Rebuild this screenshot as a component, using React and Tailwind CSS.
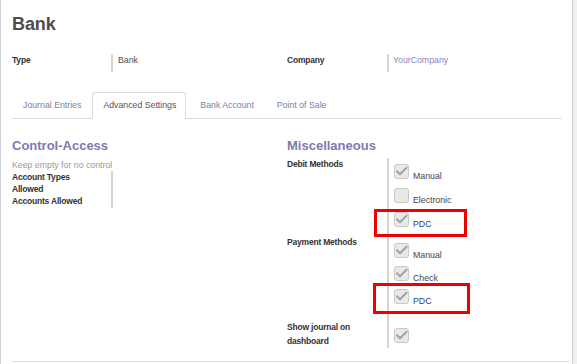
import React from "react";

function Box({ checked }) {
  return (
    <div className="relative w-[15px] h-[15px] shrink-0 rounded-[3px] border border-[#c9c9c9] bg-[#e9e9e9]">
      {checked && (
        <svg className="absolute left-[-1px] top-[-1px]" width="15" height="15" viewBox="0 0 15 15">
          <path d="M3 7.3 L6 10.3 L12.5 3.8" fill="none" stroke="#a3a3a3" strokeWidth="2.1" strokeLinecap="round" strokeLinejoin="round" />
        </svg>
      )}
    </div>
  );
}

function Item({ checked, label, color, mb }) {
  return (
    <div className={`flex items-baseline gap-[4px] h-[15px] ${mb}`}>
      <Box checked={checked} />
      <span className={`text-[8.75px] leading-[10px] ${color}`}>{label}</span>
    </div>
  );
}

export default function App() {
  return (
    <div className="relative w-[577px] h-[364px] overflow-hidden flex bg-white font-['Liberation_Sans',Arial,sans-serif]">
      <div className="w-[573px] h-full shrink-0 border-l border-r border-[#cfcfdc] pl-[11px] pr-[10px] pt-[13px] bg-white">
        <h1 className="text-[18px] leading-[22px] font-bold text-[#4c4c4c] tracking-[-0.1px]">Bank</h1>

        <div className="mt-[19px] grid grid-cols-[275px_275px]">
          <div className="flex">
            <div className="w-[99px] text-[8.5px] leading-[12px] font-bold tracking-[-0.2px] text-[#333]">Type</div>
            <div className="h-[18px] border-l-2 border-[#d4d4d4] pl-[5px] text-[8.75px] leading-[12px] text-[#4c4c4c]">Bank</div>
          </div>
          <div className="flex">
            <div className="w-[100px] text-[8.5px] leading-[12px] font-bold tracking-[-0.2px] text-[#333]">Company</div>
            <div className="h-[18px] border-l-2 border-[#d4d4d4] pl-[4px] text-[8.75px] leading-[12px] text-[#8786b8]">YourCompany</div>
          </div>
        </div>

        <div className="mt-[20px] flex border-b border-[#dcdcdc] text-[8.75px]">
          <div className="-mb-px h-[27px] flex items-center px-[10px] border border-b-0 border-transparent rounded-t-[3px] text-[#7c7bad]">Journal Entries</div>
          <div className="-mb-px h-[27px] flex items-center pl-[10px] pr-[9px] border border-b-0 border-[#dcdcdc] rounded-t-[3px] bg-white text-[#555]">Advanced Settings</div>
          <div className="-mb-px h-[27px] flex items-center pl-[13px] pr-[11px] border border-b-0 border-transparent rounded-t-[3px] text-[#7c7bad]">Bank Account</div>
          <div className="-mb-px h-[27px] flex items-center px-[10px] border border-b-0 border-transparent rounded-t-[3px] text-[#7c7bad]">Point of Sale</div>
        </div>

        <div className="mt-[19px] grid grid-cols-[275px_275px] items-start">
          <div>
            <h2 className="text-[13px] leading-[16px] font-bold text-[#7c7bad]">Control-Access</h2>
            <div className="mt-[5px] text-[8.75px] leading-[12px] text-[#9a9a9a]">Keep empty for no control</div>
            <div className="flex">
              <div className="w-[99px] pr-[12px] text-[8.5px] leading-[12px] font-bold tracking-[-0.2px] text-[#333]">Account Types Allowed</div>
              <div className="border-l-2 border-[#d4d4d4] pl-[5px]"></div>
            </div>
            <div className="flex">
              <div className="w-[99px] pr-[4px] pb-[1px] text-[8.5px] leading-[12px] font-bold tracking-[-0.2px] text-[#333]">Accounts Allowed</div>
              <div className="border-l-2 border-[#d4d4d4] pl-[5px]"></div>
            </div>
          </div>

          <div>
            <h2 className="text-[13px] leading-[16px] font-bold text-[#7c7bad]">Miscellaneous</h2>
            <div className="mt-[4px] flex">
              <div className="w-[100px] pr-[12px] text-[8.5px] leading-[12px] font-bold tracking-[-0.2px] text-[#333]">Debit Methods</div>
              <div className="border-l-2 border-[#d4d4d4] pl-[5px] pt-[6px]">
                <Item checked label="Manual" color="text-[#394565]" mb="mb-[9px]" />
                <Item label="Electronic" color="text-[#444]" mb="mb-[9px]" />
                <Item checked label="PDC" color="text-[#2a3f86]" mb="mb-[9px]" />
              </div>
            </div>
            <div className="flex">
              <div className="w-[100px] pr-[12px] text-[8.5px] leading-[12px] font-bold tracking-[-0.2px] text-[#333]">Payment Methods</div>
              <div className="border-l-2 border-[#d4d4d4] pl-[5px] pt-[7px]">
                <Item checked label="Manual" color="text-[#394565]" mb="mb-[8px]" />
                <Item checked label="Check" color="text-[#394565]" mb="mb-[8px]" />
                <Item checked label="PDC" color="text-[#2a3f86]" mb="mb-[8px]" />
              </div>
            </div>
            <div className="flex">
              <div className="w-[100px] pr-[12px] pt-[9px] text-[8.5px] leading-[13.5px] font-bold tracking-[-0.2px] text-[#333]">Show journal on dashboard</div>
              <div className="border-l-2 border-[#d4d4d4] pl-[5px] pt-[16px] pb-[1px]">
                <Box checked />
              </div>
            </div>
          </div>
        </div>

        <div className="mt-[13px] w-[558px] border-t border-[#dcdcdc]"></div>
      </div>
      <div className="w-[4px] h-full bg-[#f0f0f3]"></div>

      <div className="absolute left-[374px] top-[209px] w-[93px] h-[28px] border-[3px] border-[#f00000]"></div>
      <div className="absolute left-[373px] top-[283px] w-[97px] h-[31px] border-[3px] border-[#f00000]"></div>
    </div>
  );
}
